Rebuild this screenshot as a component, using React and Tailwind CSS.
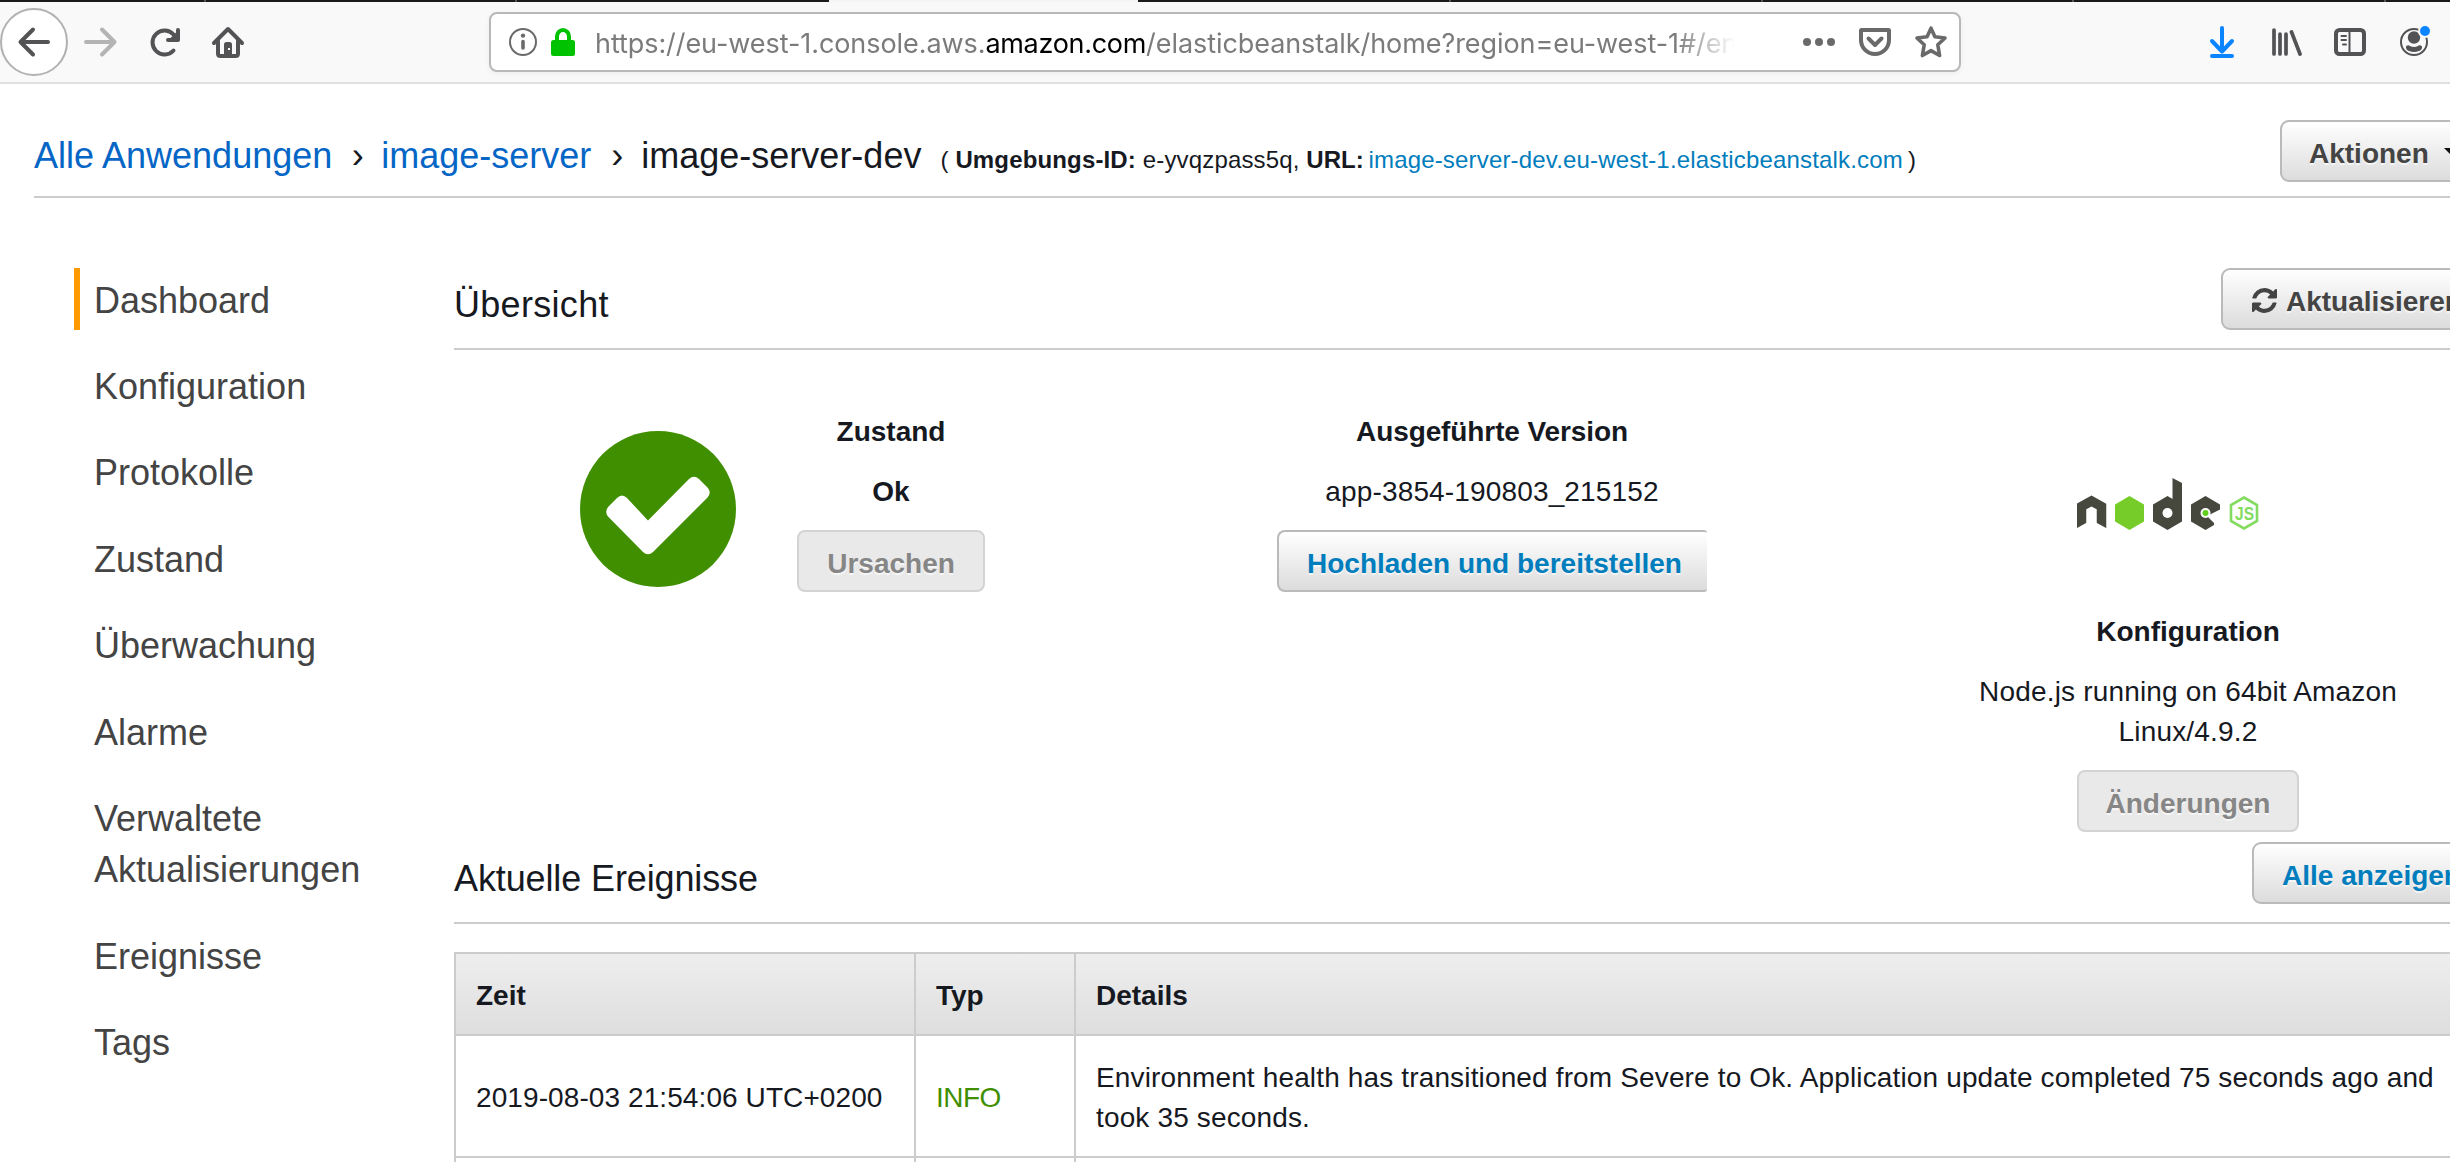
import React from "react";

const TAB_SEPARATORS = [205, 516, 1450, 1762, 2073, 2385];

const NAV_ITEMS = [
  "Dashboard",
  "Konfiguration",
  "Protokolle",
  "Zustand",
  "Überwachung",
  "Alarme",
  "Verwaltete Aktualisierungen",
  "Ereignisse",
  "Tags",
];

function Icon({ className = "", children }) {
  return (
    <svg
      viewBox="0 0 32 32"
      className={`h-8 w-8 shrink-0 overflow-visible ${className}`}
      fill="none"
      stroke="currentColor"
      strokeWidth="4"
      strokeLinecap="round"
      strokeLinejoin="round"
    >
      {children}
    </svg>
  );
}

function TabStrip() {
  return (
    <div className="relative flex h-[2px] w-full bg-[#1b1a1a]">
      <div className="ml-[829px] h-[2px] w-[309px] bg-[#f5f5f6]" />
      {TAB_SEPARATORS.map((x) => (
        <div key={x} className="absolute top-0 h-[2px] w-[2px] bg-[#555]" style={{ left: x - 1 }} />
      ))}
    </div>
  );
}

function AddressBar() {
  return (
    <div className="ml-[245px] flex h-[60px] w-[1472px] shrink-0 items-center rounded-[8px] border-2 border-[#b8b8b9] bg-white shadow-[0_2px_6px_rgba(0,0,0,0.05)]">
      <Icon className="ml-4 text-[#6a6a6a]">
        <circle cx="16" cy="16" r="13" strokeWidth="2" />
        <path d="M16 15.5V22" strokeWidth="3.6" />
        <circle cx="16" cy="9.6" r="2.2" fill="currentColor" stroke="none" />
      </Icon>
      <svg viewBox="0 0 24 28" className="ml-3 h-7 w-6 shrink-0" fill="none">
        <path d="M6 14V8.5a6 6.5 0 0 1 12 0V14" stroke="#00c200" strokeWidth="4" />
        <rect y="12" width="24" height="16" rx="2.5" fill="#00c200" />
      </svg>
      <div className="ml-5 w-[1140px] overflow-hidden whitespace-nowrap pt-[3px] font-[Inter,sans-serif] text-[27px] leading-[40px] tracking-[-0.07px] text-[#7b7b7b] [mask-image:linear-gradient(to_right,black_1080px,transparent_1140px)]">
        https://eu-west-1.console.aws.
        <span className="tracking-[-0.3px] text-black">amazon.com</span>
        /elasticbeanstalk/home?region=eu-west-1#/en
      </div>
      <Icon className="ml-[68px] text-[#6a6a6a]">
        <g fill="currentColor" stroke="none">
          <circle cx="4" cy="16" r="4" />
          <circle cx="16" cy="16" r="4" />
          <circle cx="28" cy="16" r="4" />
        </g>
      </Icon>
      <Icon className="ml-6 text-[#6a6a6a]">
        <path d="M2 4.5Q2 4 2.5 4H29.5Q30 4 30 4.5V14A14 14 0 0 1 2 14Z" />
        <path d="M9.5 12.5L16 19l6.5-6.5" />
      </Icon>
      <Icon className="ml-6 text-[#6a6a6a]">
        <path
          strokeWidth="3.6"
          d="M16 2.2L19.9 10.8L30 12L22.8 18.8L24.6 29.5L16 24.6L7.4 29.5L9.2 18.8L2 12L12.1 10.8Z"
        />
      </Icon>
    </div>
  );
}

function Toolbar() {
  return (
    <div className="flex h-[82px] items-center border-b-2 border-[#e0e0e2] bg-[#f9f9fa] text-[#535355]">
      <div className="flex h-[68px] w-[68px] shrink-0 items-center justify-center rounded-full border-2 border-[#b1b1b2] bg-white">
        <Icon>
          <path d="M30 16H3M15 3.5L2.5 16L15 28.5" />
        </Icon>
      </div>
      <Icon className="ml-4 text-[#b4b4b5]">
        <path d="M2 16H29M18 3.5L30.5 16L18 28.5" />
      </Icon>
      <Icon className="ml-8">
        <path d="M25.5 24.5A12 12 0 1 1 25.5 8.5" />
        <path d="M30 4V14H20" />
        <path d="M30 6V14H22Z" fill="currentColor" strokeWidth="2" />
      </Icon>
      <Icon className="ml-8">
        <path d="M2 17L16 3L30 17" />
        <path d="M6 15V27.5Q6 30 8.5 30H23.5Q26 30 26 27.5V15" />
        <path d="M12 29V18.5Q12 16 14.5 16H17.5Q20 16 20 18.5V29Z" fill="currentColor" stroke="none" />
        <rect x="16" y="22" width="2" height="2" fill="white" stroke="none" />
      </Icon>
      <AddressBar />
      <Icon className="ml-[245px] text-[#0a84ff]">
        <path d="M16 2V24M6 15L16 25.5L26 15M6 30H26" />
      </Icon>
      <Icon className="ml-8">
        <path d="M4 4V28M10 8V28M16 8V28M21.5 6L30 28" strokeWidth="3.7" />
      </Icon>
      <Icon className="ml-8">
        <rect x="2" y="4" width="28" height="24" rx="3.5" />
        <path d="M15.5 4V28" strokeWidth="2" />
        <path d="M7.5 10H12M7.5 14H12M9 18.5H12" strokeWidth="2" />
      </Icon>
      <Icon className="ml-8">
        <circle cx="16" cy="16" r="13" strokeWidth="2" />
        <circle cx="16" cy="11.5" r="6.2" fill="currentColor" stroke="none" />
        <path
          d="M8 20.5Q10 18.5 12 20Q16 22 20 20Q22 18.5 24 20.5Q24.5 23.5 21 25Q16 27 11 25Q7.5 23.5 8 20.5Z"
          fill="currentColor"
          stroke="none"
        />
        <circle cx="27" cy="5" r="7" fill="#f9f9fa" stroke="none" />
        <circle cx="27" cy="5" r="5" fill="#0a84ff" stroke="none" />
      </Icon>
    </div>
  );
}

function Button({ className = "", disabled = false, children }) {
  const look = disabled
    ? "border-[#d3d3d3] bg-[#e9e9e9] text-[#868686]"
    : "border-[#bababa] bg-linear-to-b from-white to-[#dcdcdc]";
  return (
    <button
      type="button"
      className={`flex h-[62px] shrink-0 items-center whitespace-nowrap border-2 pt-[6px] text-[28px] leading-[40px] font-bold [text-shadow:0_2px_0_rgba(255,255,255,0.6)] ${look} ${className}`}
    >
      {children}
    </button>
  );
}

function Breadcrumb() {
  return (
    <div className="flex h-[114px] justify-between border-b-2 border-[#ccc]">
      <div className="flex items-baseline whitespace-nowrap pt-[47px] text-[36px] leading-[50px]">
        <a className="text-[#0566c6]">Alle Anwendungen</a>
        <span className="w-[49px] pl-[2px] text-center">›</span>
        <a className="text-[#0566c6]">image-server</a>
        <span className="w-[50px] pl-[2px] text-center">›</span>
        <span>image-server-dev</span>
        <span className="ml-[19px] text-[24px] tracking-[0.15px]">
          ( <b>Umgebungs-ID:</b> e-yvqzpass5q, <b className="mr-[-2px] tracking-normal">URL:</b>{" "}
          <a className="tracking-[0.17px] text-[#007dbc]">image-server-dev.eu-west-1.elasticbeanstalk.com</a>
          <span className="ml-[5px]">)</span>
        </span>
      </div>
      <Button className="mt-9 w-[212px] rounded-[9px] pl-[27px] text-[#444]">
        Aktionen
        <span className="ml-[15px] mb-1 border-x-[9px] border-t-[9px] border-x-transparent border-t-[#111]" />
      </Button>
    </div>
  );
}

function Sidebar() {
  return (
    <nav className="flex w-[380px] shrink-0 flex-col gap-6 pl-10 text-[36px] leading-[51.4px] text-[#444]">
      {NAV_ITEMS.map((item, index) => (
        <a
          key={item}
          className={`w-[320px] border-l-[6px] pt-[6.5px] pb-[4.5px] pl-[14px] ${
            index === 0 ? "border-[#ff9900]" : "border-transparent"
          }`}
        >
          {item}
        </a>
      ))}
    </nav>
  );
}

function SectionHeader({ title, titleClass = "", children }) {
  return (
    <div className="flex h-[82px] justify-between border-b-2 border-[#ccc]">
      <h2 className={`pt-[12px] text-[36px] leading-[50px] ${titleClass}`}>{title}</h2>
      {children}
    </div>
  );
}

function NodeLogo() {
  return (
    <svg viewBox="0 0 182 52" className="h-[52px] w-[182px]">
      <path d="M4.5 50V28.5L14.5 23L24.5 28.5V50" fill="none" stroke="#46483e" strokeWidth="9.5" />
      <path d="M-1 50.500L10 44.500V52H-1ZM30 50.500L19 44.500V52H30Z" fill="white" />
      <path d="M52.5 18L67 26.5V43.5L52.5 52L38 43.5V26.5Z" fill="#76cd29" />
      <path d="M90.5 18L105 26.5V43.5L90.5 52L76 43.5V26.5Z" fill="#46483e" />
      <path d="M95.5 0L105 5V36H95.5Z" fill="#46483e" />
      <circle cx="90.5" cy="35" r="5" fill="white" />
      <path d="M128.5 18L143 26.5V33L134 39L137 42.5L137 47L128.5 52L114 43.5V26.5Z" fill="#46483e" />
      <circle cx="128.5" cy="35" r="5" fill="white" />
      <path d="M130 38L144 31V45L137 45Z" fill="white" />
      <circle cx="128.5" cy="35" r="3" fill="#5fcf1b" />
      <path d="M167 19.5L180 27V43L167 50.5L154 43V27Z" fill="none" stroke="#83dc60" strokeWidth="2.6" />
      <text
        x="167.5"
        y="42"
        textAnchor="middle"
        fontSize="18"
        fontWeight="700"
        fontFamily="Liberation Sans, sans-serif"
        textLength="19"
        lengthAdjust="spacingAndGlyphs"
        fill="#83dc60"
      >
        JS
      </text>
    </svg>
  );
}

function Overview() {
  return (
    <div className="flex h-[492px] text-center text-[28px] leading-[40px]">
      <svg viewBox="0 0 156 156" className="ml-[126px] mt-[81px] h-[156px] w-[156px] shrink-0">
        <circle cx="78" cy="78" r="78" fill="#3f8f00" />
        <path
          fill="white"
          d="M37 67Q42 62 47 67L68 89.5L109 48Q114 43.5 119 48L127.5 56.5Q132 61.5 127.5 66.5L73 121Q68 125.5 63 121L28.5 86Q24 81 28.5 75.5Z"
        />
      </svg>
      <div className="ml-[61px] flex w-[188px] shrink-0 flex-col gap-5 pt-[62px] font-bold">
        <p>Zustand</p>
        <p>Ok</p>
        <Button disabled className="mt-[-2px] justify-center rounded-[8px]">Ursachen</Button>
      </div>
      <div className="ml-[292px] flex w-[430px] shrink-0 flex-col gap-5 pt-[62px]">
        <p className="font-bold tracking-[-0.1px]">Ausgeführte Version</p>
        <p className="tracking-[0.15px]">app-3854-190803_215152</p>
        <Button className="mt-[-2px] rounded-l-[8px] rounded-r-[3px] border-r-0 pl-[28px] text-[#007dbc]">
          Hochladen und bereitstellen
        </Button>
      </div>
      <div className="ml-[271px] w-[420px] shrink-0 pt-[128px]">
        <div className="pl-[99px]">
          <NodeLogo />
        </div>
        <p className="mt-[82px] font-bold">Konfiguration</p>
        <p className="mt-5 tracking-[0.17px]">
          Node.js running on 64bit Amazon
          <br />
          Linux/4.9.2
        </p>
        <Button disabled className="mx-auto mt-[18px] w-[222px] justify-center rounded-[8px]">
          Änderungen
        </Button>
      </div>
    </div>
  );
}

function EventsTable() {
  return (
    <div className="mt-7 border-l-2 border-t-2 border-[#ccc] text-[28px] leading-[40px]">
      <div className="grid h-[82px] grid-cols-[460px_160px_1fr] border-b-2 border-[#ccc] bg-linear-to-b from-[#eeeeee] to-[#dedede] font-bold">
        <div className="flex items-center border-r-2 border-[#ccc] pl-5 pt-[4px]">Zeit</div>
        <div className="flex items-center border-r-2 border-[#ccc] pl-5 pt-[4px]">Typ</div>
        <div className="flex items-center pl-5 pt-[4px]">Details</div>
      </div>
      <div className="grid h-[122px] grid-cols-[460px_160px_1fr] border-b-2 border-[#ccc]">
        <div className="flex items-center border-r-2 border-[#ccc] pl-5 pt-[3px] tracking-[0.09px]">
          2019-08-03 21:54:06 UTC+0200
        </div>
        <div className="flex items-center border-r-2 border-[#ccc] pl-5 pt-[3px] tracking-[-0.5px] text-[#3f8f00]">INFO</div>
        <div className="flex items-center pl-5 pt-[3px] tracking-[0.145px]">
          <p className="w-[1360px]">
            Environment health has transitioned from Severe to Ok. Application update completed 75 seconds ago and took 35
            seconds.
          </p>
        </div>
      </div>
      <div className="grid h-10 grid-cols-[460px_160px_1fr]">
        <div className="border-r-2 border-[#ccc]" />
        <div className="border-r-2 border-[#ccc]" />
        <div />
      </div>
    </div>
  );
}

export default function App() {
  return (
    <div className="h-[1162px] w-full overflow-hidden bg-white font-['Liberation_Sans',Arial,sans-serif] text-[#16191f]">
      <TabStrip />
      <Toolbar />
      <div className="w-[2492px] pl-[34px]">
        <Breadcrumb />
        <div className="flex pt-[70px]">
          <Sidebar />
          <main className="ml-10 w-[2038px] shrink-0">
            <SectionHeader title="Übersicht" titleClass="tracking-[0.3px]">
              <Button className="w-[271px] rounded-[9px] pl-[29px] text-[#444]">
                <svg viewBox="0 0 1536 1536" className="mb-[4px] mr-[9px] h-[25px] w-[25px]" fill="#444">
                  <path d="M1511 928q0 5-1 7-64 268-268 434.5t-478 166.5q-146 0-282.5-55t-243.5-157l-129 129q-19 19-45 19t-45-19-19-45v-448q0-26 19-45t45-19h448q26 0 45 19t19 45-19 45l-137 137q71 66 161 102t187 36q134 0 250-65t186-179q11-17 53-117 8-23 30-23h192q13 0 22.5 9.5t9.5 22.5zm25-800v448q0 26-19 45t-45 19h-448q-26 0-45-19t-19-45 19-45l138-138q-148-137-349-137-134 0-250 65t-186 179q-11 17-53 117-8 23-30 23h-199q-13 0-22.5-9.5t-9.5-22.5v-7q65-268 270-434.5t480-166.5q146 0 284 55.5t245 156.5l130-129q19-19 45-19t45 19 19 45z" />
                </svg>
                Aktualisieren
              </Button>
            </SectionHeader>
            <Overview />
            <SectionHeader title="Aktuelle Ereignisse" titleClass="tracking-[-0.12px]">
              <Button className="w-[240px] rounded-[9px] pl-[28px] text-[#007dbc]">Alle anzeigen</Button>
            </SectionHeader>
            <EventsTable />
          </main>
        </div>
      </div>
    </div>
  );
}
